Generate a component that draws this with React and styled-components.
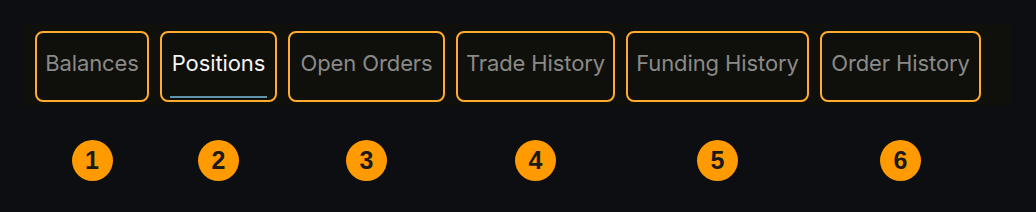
import React from 'react';
import styled, { createGlobalStyle } from 'styled-components';

const GlobalStyle = createGlobalStyle`
  html, body {
    margin: 0;
    padding: 0;
    background: #0c0e12;
  }
`;

const Page = styled.div`
  width: 1036px;
  height: 212px;
  padding: 24px 0 0 24px;
  box-sizing: border-box;
  background: #0c0e12;
  font-family: Inter, 'Noto Sans', sans-serif;
`;

const Strip = styled.div`
  display: flex;
  gap: 11px;
  width: 988px;
  height: 82px;
  box-sizing: border-box;
  padding: 7px 0 0 11px;
  background: #0f0f0b;
`;

const Tab = styled.div`
  display: flex;
  flex-direction: column;
  align-items: center;
  width: ${(p) => p.$width}px;
  height: 71px;
  box-sizing: border-box;
  padding: 18px 0 2px;
  border: 2px solid #ffab2e;
  border-radius: 8px;
`;

const Label = styled.span`
  font-size: 22px;
  line-height: 24px;
  letter-spacing: -0.1px;
  white-space: nowrap;
  color: ${(p) => (p.$active ? '#f4f4f4' : '#8a8a88')};
`;

const Bar = styled.div`
  margin-top: auto;
  align-self: stretch;
  margin-left: 8px;
  margin-right: 8px;
  height: 2px;
  background: ${(p) => (p.$active ? '#5e93ab' : 'transparent')};
`;

const Markers = styled.div`
  display: flex;
  gap: 11px;
  padding: 34px 0 0 11px;
`;

const Slot = styled.div`
  display: flex;
  justify-content: center;
  width: ${(p) => p.$width}px;
`;

const Badge = styled.div`
  display: flex;
  align-items: center;
  justify-content: center;
  width: 41px;
  height: 41px;
  border-radius: 50%;
  background: #ff9a00;
  color: #1a1a1a;
  font-family: 'Liberation Sans', Arial, sans-serif;
  font-weight: 700;
  font-size: 25px;
`;

const tabs = [
  { label: 'Balances', width: 114 },
  { label: 'Positions', width: 117, active: true },
  { label: 'Open Orders', width: 157 },
  { label: 'Trade History', width: 159 },
  { label: 'Funding History', width: 183 },
  { label: 'Order History', width: 161 },
];

const App = () => (
  <Page>
    <GlobalStyle />
    <Strip>
      {tabs.map((t) => (
        <Tab key={t.label} $width={t.width}>
          <Label $active={t.active}>{t.label}</Label>
          <Bar $active={t.active} />
        </Tab>
      ))}
    </Strip>
    <Markers>
      {tabs.map((t, i) => (
        <Slot key={t.label} $width={t.width}>
          <Badge>{i + 1}</Badge>
        </Slot>
      ))}
    </Markers>
  </Page>
);

export default App;
